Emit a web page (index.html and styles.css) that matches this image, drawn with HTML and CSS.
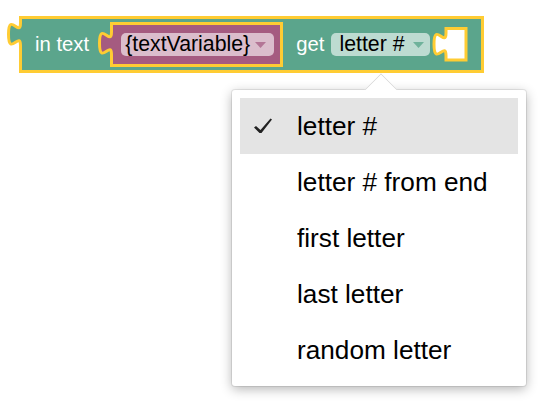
FILE: index.html
```html
<!DOCTYPE html>
<html lang="en">
<head>
<meta charset="utf-8">
<title>Blockly text block</title>
<link rel="stylesheet" href="styles.css">
</head>
<body>
<div class="stage">
  <div class="block">
    <svg class="tab tab-main" width="18" height="30" viewBox="0 0 18 30">
      <path class="tab-fill-green" d="M14.5,0 V4 c0,15 -12,-12 -12,11.25 s12,-3.75 12,11.25 V30 H18 V0 Z"/>
      <path class="tab-stroke" d="M14.5,0 V4 c0,15 -12,-12 -12,11.25 s12,-3.75 12,11.25 V30"/>
    </svg>
    <span class="label">in text</span>
    <div class="var-block">
      <svg class="tab tab-var" width="18" height="32" viewBox="0 0 18 32">
        <path class="tab-fill-purple" d="M13.5,0 V7 c0,15 -12,-12 -12,11.25 s12,-3.75 12,11.25 V32 H18 V0 Z"/>
        <path class="tab-stroke" d="M13.5,0 V7 c0,15 -12,-12 -12,11.25 s12,-3.75 12,11.25 V32"/>
      </svg>
      <div class="field field-var">
        <span>{textVariable}</span>
        <svg class="arrow arrow-var" width="11" height="6" viewBox="0 0 11 6"><polygon points="0,0 11,0 5.5,6"/></svg>
      </div>
    </div>
    <span class="label label-get">get</span>
    <div class="field field-get">
      <span>letter #</span>
      <svg class="arrow arrow-get" width="11" height="6" viewBox="0 0 11 6"><polygon points="0,0 11,0 5.5,6"/></svg>
    </div>
    <svg class="hole" width="38" height="36" viewBox="0 0 38 36">
      <path d="M15,1.5 H35 V33 H15 V28.5 c0,-15 -12,12 -12,-11.25 s12,3.75 12,-11.25 V1.5 Z"/>
    </svg>
  </div>

  <div class="menu">
    <div class="menu-arrow"></div>
    <div class="menu-item selected">
      <svg class="check" width="20" height="16" viewBox="0 0 20 16">
        <path d="M1,9.5 L3,8 L7.5,12 L17.5,0.5 L19,1.5 L8.5,15 L6.5,15 Z"/>
      </svg>
      <span>letter #</span>
    </div>
    <div class="menu-item"><span class="check"></span><span>letter # from end</span></div>
    <div class="menu-item"><span class="check"></span><span>first letter</span></div>
    <div class="menu-item"><span class="check"></span><span>last letter</span></div>
    <div class="menu-item"><span class="check"></span><span>random letter</span></div>
  </div>
</div>
</body>
</html>
```

FILE: styles.css
```css
html, body {
  margin: 0;
  padding: 0;
  background: #fff;
}

body {
  font-family: "Liberation Sans", Arial, Helvetica, sans-serif;
}

.stage {
  position: relative;
  width: 556px;
  height: 414px;
  box-sizing: border-box;
  padding: 16px 0 0 19px;
}

/* main text block */
.block {
  position: relative;
  display: flex;
  width: fit-content;
  align-items: center;
  height: 57px;
  box-sizing: border-box;
  background: #5ba58c;
  border: 3px solid #fc3;
  padding: 0 12px 0 13px;
}

.tab {
  position: absolute;
  overflow: visible;
}

.tab-main {
  left: -16px;
  top: 0;
}

.tab-var {
  left: -15px;
  top: 0;
}

.tab-fill-green { fill: #5ba58c; }
.tab-fill-purple { fill: #a55b80; }

.tab-stroke {
  fill: none;
  stroke: #fc3;
  stroke-width: 3;
}

.label {
  color: #fff;
  font-size: 20.3px;
  line-height: 1;
  white-space: nowrap;
}

.label-get {
  margin-left: 13px;
}

/* variable block */
.var-block {
  position: relative;
  display: flex;
  align-items: center;
  height: 45px;
  box-sizing: border-box;
  margin-left: 21px;
  padding: 0 6px 0 8px;
  background: #a55b80;
  border: 3px solid #fc3;
}

.field {
  display: flex;
  align-items: center;
  height: 23px;
  border-radius: 5px;
  font-size: 21.3px;
  line-height: 1;
  color: #000;
  white-space: nowrap;
}

.field-var {
  background: #dbbdcc;
  padding: 0 8px 0 4px;
  gap: 5px;
}

.field-get {
  margin-left: 7px;
  background: #bddbd1;
  padding: 0 6px 0 8px;
  gap: 8px;
}

.arrow { flex: none; }
.arrow-var { fill: #b47596; }
.arrow-get { fill: #6fb29b; }

.hole {
  flex: none;
  margin-left: 1px;
}

.hole path {
  fill: #fff;
  stroke: #fc3;
  stroke-width: 3;
}

/* dropdown menu */
.menu {
  position: absolute;
  left: 232px;
  top: 90px;
  width: 294px;
  box-sizing: border-box;
  padding: 8px;
  background: #fff;
  border-radius: 3px;
  box-shadow: 0 0 0 1px rgba(0, 0, 0, 0.08), 0 3px 12px rgba(0, 0, 0, 0.3);
}

.menu-arrow {
  position: absolute;
  left: 137px;
  top: -12px;
  width: 24px;
  height: 24px;
  box-sizing: border-box;
  background: #fff;
  border-top: 1px solid #d9d9d9;
  border-left: 1px solid #d9d9d9;
  transform: rotate(45deg);
  clip-path: polygon(0 0, 100% 0, 0 100%);
}

.menu-item {
  display: flex;
  align-items: center;
  height: 56px;
  padding-left: 13px;
  font-size: 26.2px;
  color: #000;
  white-space: nowrap;
}

.menu-item.selected {
  background: #e4e4e4;
}

.check {
  display: block;
  flex: none;
  width: 20px;
  height: 16px;
  margin-right: 24px;
  fill: #222;
}
```
